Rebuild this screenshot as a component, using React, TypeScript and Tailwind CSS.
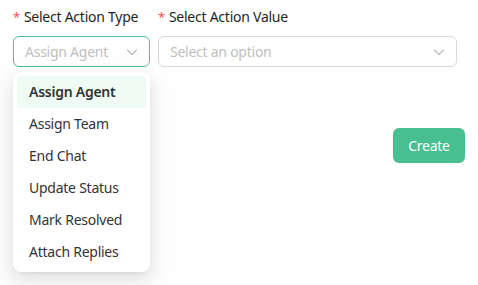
import { useState } from 'react';

const actionTypes = [
  'Assign Agent',
  'Assign Team',
  'End Chat',
  'Update Status',
  'Mark Resolved',
  'Attach Replies',
];

const Chevron = () => (
  <svg width="12" height="12" viewBox="0 0 12 12" fill="none" className="shrink-0">
    <path d="M1.5 4l4.5 4.5L10.5 4" stroke="#b8b8b8" strokeWidth="1.1" strokeLinecap="round" strokeLinejoin="round" />
  </svg>
);

const App = () => {
  const [selected] = useState('Assign Agent');

  return (
    <div
      className="w-[478px] h-[285px] bg-white px-[13px] pt-[6px] text-[14px] tracking-[-0.25px] text-[#1f1f1f]"
      style={{ fontFamily: '"Segoe UI", "Noto Sans", sans-serif' }}
    >
      <div className="flex gap-[8px]">
        <div className="w-[137px] relative">
          <label className="flex items-center h-[22px] leading-[22px]">
            <span className="text-[#ff4d4f] mr-[4px] text-[13px]">*</span>
            Select Action Type
          </label>
          <div className="mt-[8px] h-[31px] rounded-[6px] border border-[#4cc08f] flex items-center justify-between pl-[11px] pr-[11px]">
            <span className="text-[#bfbfbf]">{selected}</span>
            <Chevron />
          </div>

          {/* open menu */}
          <div className="absolute left-0 top-[66px] w-[137px] bg-white rounded-[8px] p-[4px] shadow-[0_6px_16px_0_rgba(0,0,0,0.08),0_3px_6px_-4px_rgba(0,0,0,0.12),0_9px_28px_8px_rgba(0,0,0,0.05)] z-10">
            {actionTypes.map((t) => (
              <div
                key={t}
                className={`h-[32px] flex items-center px-[12px] pb-[1px] rounded-[4px] text-[#333] ${
                  t === selected ? 'bg-[#effcf5] font-semibold' : ''
                }`}
              >
                {t}
              </div>
            ))}
          </div>
        </div>

        <div className="w-[299px]">
          <label className="flex items-center h-[22px] leading-[22px]">
            <span className="text-[#ff4d4f] mr-[4px] text-[13px]">*</span>
            Select Action Value
          </label>
          <div className="mt-[8px] h-[31px] rounded-[6px] border border-[#d9d9d9] flex items-center justify-between pl-[11px] pr-[11px]">
            <span className="text-[#bfbfbf]">Select an option</span>
            <Chevron />
          </div>
        </div>
      </div>

      <div className="flex justify-end mt-[61px]">
        <button className="w-[72px] h-[35px] rounded-[6px] bg-[#48bf91] text-white text-[14px]">
          Create
        </button>
      </div>
    </div>
  );
};

export default App;
